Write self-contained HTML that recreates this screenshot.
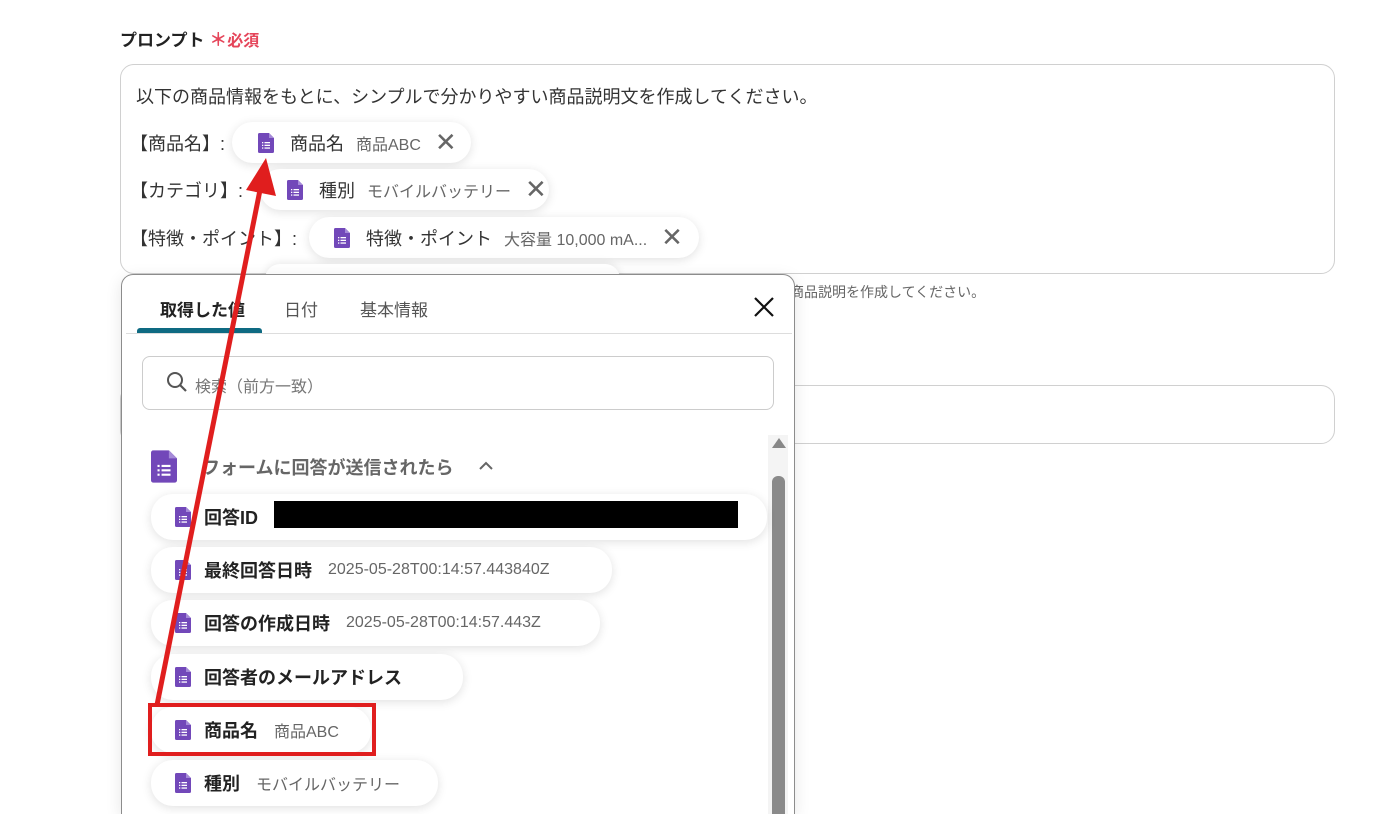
<!DOCTYPE html>
<html><head><meta charset="utf-8"><style>
*{margin:0;padding:0;box-sizing:border-box}
html,body{width:1390px;height:814px;overflow:hidden}
body{background:#fff;font-family:"Liberation Sans","Noto Sans CJK JP",sans-serif;color:#222;position:relative}
.a{position:absolute;white-space:nowrap}
.pill{position:absolute;background:#fff;border-radius:22px;box-shadow:0 2px 10px rgba(0,0,0,.12);display:flex;align-items:center;white-space:nowrap}
.t{font-size:18px;color:#333}
.s{font-size:16px;color:#666;margin-left:12px}
.x{font-size:26px;color:#666;margin-left:14px;font-weight:300}
.bt{font-size:18px;font-weight:bold;color:#222}
.gv{font-size:16px;color:#666;margin-left:16px}
</style></head><body>
<svg width="0" height="0" style="position:absolute"><defs><symbol id="ic" viewBox="0 0 16 20"><path d="M1.5 0H11l5 5v13.5A1.5 1.5 0 0 1 14.5 20h-13A1.5 1.5 0 0 1 0 18.5v-17A1.5 1.5 0 0 1 1.5 0z" fill="#7248b9"/><path d="M11 0v5h5z" fill="#a58ad8"/><g fill="#fff"><rect x="4" y="9" width="1.3" height="1.3"/><rect x="6.5" y="9" width="5.5" height="1.3"/><rect x="4" y="11.7" width="1.3" height="1.3"/><rect x="6.5" y="11.7" width="5.5" height="1.3"/><rect x="4" y="14.4" width="1.3" height="1.3"/><rect x="6.5" y="14.4" width="5.5" height="1.3"/></g></symbol></defs></svg>

<div class="a" style="left:120px;top:26px;font-size:17px;font-weight:bold;color:#222">プロンプト <span style="color:#e5455a;font-size:18px">＊</span><span style="color:#e5455a;font-size:16px">必須</span></div>

<div class="a" style="left:120px;top:64px;width:1215px;height:210px;border:1px solid #d0d0d0;border-radius:14px"></div>
<div class="a t" style="left:136px;top:83px">以下の商品情報をもとに、シンプルで分かりやすい商品説明文を作成してください。</div>
<div class="a t" style="left:130px;top:130px">【商品名】:</div>
<div class="a t" style="left:130px;top:177px">【カテゴリ】:</div>
<div class="a t" style="left:130px;top:225px">【特徴・ポイント】:</div>

<div class="pill" style="left:232px;top:122px;width:239px;height:41px;padding-left:26px"><svg width="16" height="20"><use href="#ic"/></svg><span class="t" style="margin-left:16px">商品名</span><span class="s">商品ABC</span><span class="x">✕</span></div>
<div class="pill" style="left:260px;top:169px;width:289px;height:41px;padding-left:27px"><svg width="16" height="20"><use href="#ic"/></svg><span class="t" style="margin-left:16px">種別</span><span class="s">モバイルバッテリー</span><span class="x">✕</span></div>
<div class="pill" style="left:309px;top:217px;width:390px;height:41px;padding-left:25px"><svg width="16" height="20"><use href="#ic"/></svg><span class="t" style="margin-left:16px">特徴・ポイント</span><span class="s">大容量 10,000 mA...</span><span class="x">✕</span></div>
<div class="pill" style="left:265px;top:264px;width:355px;height:30px;box-shadow:0 -2px 8px rgba(0,0,0,.08)"></div>

<div class="a" style="left:790px;top:282px;font-size:14px;color:#666">商品説明を作成してください。</div>
<div class="a" style="left:120px;top:385px;width:1215px;height:59px;border:1px solid #d0d0d0;border-radius:14px"></div>

<div class="a" style="left:121px;top:274px;width:674px;height:540px;background:#fff;border:1px solid #8c8c8c;border-bottom:none;border-radius:12px 12px 0 0;box-shadow:0 4px 16px rgba(0,0,0,.1);overflow:hidden">
  <div class="a" style="left:38px;top:21px;font-size:17px;font-weight:bold;color:#222">取得した値</div>
  <div class="a" style="left:162px;top:21px;font-size:17px;color:#555">日付</div>
  <div class="a" style="left:238px;top:21px;font-size:17px;color:#555">基本情報</div>
  <div class="a" style="left:15px;top:53px;width:125px;height:5px;background:#0e6a82;border-radius:3px 3px 0 0"></div>
  <div class="a" style="left:4px;top:58px;width:666px;height:1px;background:#ddd"></div>
  <svg class="a" style="left:631px;top:21px" width="22" height="22" viewBox="0 0 22 22"><path d="M2 2L20 20M20 2L2 20" stroke="#111" stroke-width="2.2"/></svg>
  <div class="a" style="left:20px;top:81px;width:632px;height:54px;border:1px solid #ccc;border-radius:8px"></div>
  <svg class="a" style="left:44px;top:96px" width="22" height="22" viewBox="0 0 22 22"><circle cx="9" cy="9" r="7" fill="none" stroke="#555" stroke-width="2"/><path d="M14 14l6 6" stroke="#555" stroke-width="2.2"/></svg>
  <div class="a" style="left:73px;top:98px;font-size:16px;color:#777">検索（前方一致）</div>
  <div class="a" style="left:646px;top:160px;width:20px;height:400px;background:#f4f4f4"></div>
  <svg class="a" style="left:650px;top:163px" width="14" height="10"><path d="M7 0L14 10H0z" fill="#888"/></svg>
  <div class="a" style="left:650px;top:201px;width:13px;height:360px;background:#8a8a8a;border-radius:6px 6px 0 0"></div>
  <svg class="a" style="left:29px;top:175px" width="26" height="33" viewBox="0 0 16 20"><use href="#ic"/></svg>
  <div class="a" style="left:80px;top:179px;font-size:18px;color:#666;font-weight:bold">フォームに回答が送信されたら</div>
  <svg class="a" style="left:357px;top:186px" width="14" height="10"><path d="M1 8L7 2L13 8" fill="none" stroke="#666" stroke-width="2"/></svg>
</div>

<div class="pill" style="left:151px;top:494px;width:616px;height:46px;padding-left:24px"><svg width="16" height="20"><use href="#ic"/></svg><span class="bt" style="margin-left:13px">回答ID</span></div>
<div class="a" style="left:274px;top:501px;width:464px;height:27px;background:#000"></div>
<div class="pill" style="left:151px;top:547px;width:461px;height:46px;padding-left:24px"><svg width="16" height="20"><use href="#ic"/></svg><span class="bt" style="margin-left:13px">最終回答日時</span><span class="gv">2025-05-28T00:14:57.443840Z</span></div>
<div class="pill" style="left:151px;top:600px;width:449px;height:46px;padding-left:24px"><svg width="16" height="20"><use href="#ic"/></svg><span class="bt" style="margin-left:13px">回答の作成日時</span><span class="gv">2025-05-28T00:14:57.443Z</span></div>
<div class="pill" style="left:151px;top:654px;width:312px;height:46px;padding-left:24px"><svg width="16" height="20"><use href="#ic"/></svg><span class="bt" style="margin-left:13px">回答者のメールアドレス</span></div>
<div class="pill" style="left:151px;top:707px;width:220px;height:46px;padding-left:24px"><svg width="16" height="20"><use href="#ic"/></svg><span class="bt" style="margin-left:13px">商品名</span><span class="gv">商品ABC</span></div>
<div class="pill" style="left:151px;top:760px;width:287px;height:46px;padding-left:24px"><svg width="16" height="20"><use href="#ic"/></svg><span class="bt" style="margin-left:13px">種別</span><span class="gv">モバイルバッテリー</span></div>

<div class="a" style="left:148px;top:703px;width:228px;height:53px;border:4px solid #e01e1e"></div>
<svg class="a" style="left:0;top:0" width="1390" height="814"><path d="M157 705L260 190" stroke="#e01e1e" stroke-width="5"/><path d="M266 158L276 196L246 190z" fill="#e01e1e"/></svg>
</body></html>
